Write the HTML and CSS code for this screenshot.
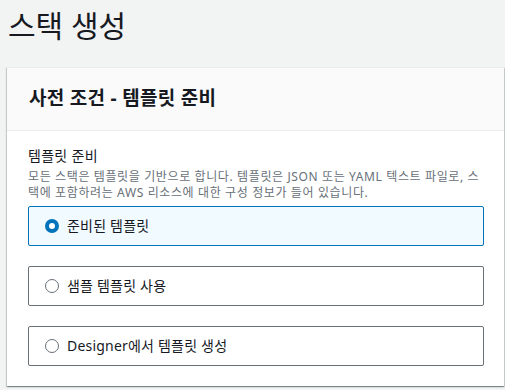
FILE: index.html
```html
<!DOCTYPE html>
<html lang="ko">
<head>
<meta charset="utf-8">
<link rel="stylesheet" href="styles.css">
</head>
<body>
<h1 class="page-title">스택 생성</h1>
<div class="card">
  <div class="card-header"><h2 class="card-title">사전 조건 - 템플릿 준비</h2></div>
  <div class="card-body">
    <div class="field-label">템플릿 준비</div>
    <div class="field-desc">모든 스택은 템플릿을 기반으로 합니다. 템플릿은 JSON 또는 YAML 텍스트 파일로, 스택에 포함하려는 AWS 리소스에 대한 구성 정보가 들어 있습니다.</div>
    <div class="tiles">
      <label class="tile selected"><span class="radio checked"></span><span class="tile-text">준비된 템플릿</span></label>
      <label class="tile"><span class="radio"></span><span class="tile-text">샘플 템플릿 사용</span></label>
      <label class="tile"><span class="radio"></span><span class="tile-text">Designer에서 템플릿 생성</span></label>
    </div>
  </div>
</div>
</body>
</html>
```
FILE: styles.css
```css
* { box-sizing: border-box; }
html, body { margin: 0; padding: 0; }
body {
  background: #f2f3f3;
  font-family: "Noto Sans", "Noto Sans CJK KR", sans-serif;
  color: #16191f;
  width: 505px;
  height: 390px;
  overflow: hidden;
}
.page-title {
  margin: 0;
  padding: 6px 8px 0 8px;
  font-size: 30px;
  font-weight: 400;
  line-height: 40px;
  height: 67px;
}
.card {
  margin-left: 7px;
  width: 497px;
  background: #fff;
  border-top: 1px solid #eaeded;
  box-shadow: 0 1px 1px 0 rgba(0,28,36,.3), 1px 1px 1px 0 rgba(0,28,36,.15), -1px 1px 1px 0 rgba(0,28,36,.15);
}
.card-header {
  background: #fafafa;
  border-bottom: 1px solid #eaeded;
  padding: 18px 22px 19px;
}
.card-title {
  margin: 0;
  font-size: 19px;
  font-weight: 700;
  line-height: 25px;
  letter-spacing: 0.3px;
}
.card-body {
  padding: 15px 20px 20px 21px;
}
.field-label {
  font-size: 14px;
  line-height: 20px;
  letter-spacing: 0.3px;
}
.field-desc {
  font-size: 12px;
  line-height: 16px;
  color: #687078;
  margin-top: 3px;
  letter-spacing: 0.62px;
}
.tiles {
  display: flex;
  flex-direction: column;
  gap: 20px;
  margin-top: 5px;
}
.tile {
  display: flex;
  align-items: center;
  gap: 8px;
  height: 40px;
  padding: 0 16px;
  border: 1px solid #687078;
  border-radius: 2px;
  background: #fff;
}
.tile.selected {
  border-color: #0073bb;
  background: #f1faff;
}
.radio {
  width: 14px;
  height: 14px;
  border-radius: 50%;
  border: 1.5px solid #687078;
  background: #fff;
  flex: none;
}
.radio.checked {
  border: 4px solid #0073bb;
}
.tile-text {
  font-size: 14px;
  line-height: 20px;
  letter-spacing: 0.2px;
}
```
